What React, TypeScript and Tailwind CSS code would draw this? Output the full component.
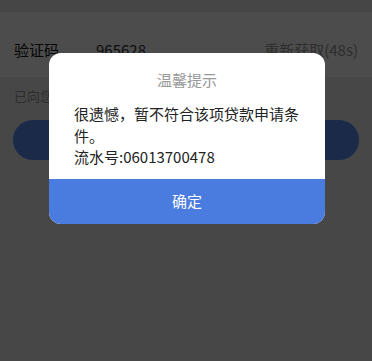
import React from 'react';

const font = { fontFamily: '"Noto Sans CJK SC", "Noto Sans", sans-serif' };

export default function App() {
    return (
        <div className="relative w-[372px] h-[361px] overflow-hidden bg-[#eeeeee]" style={font}>
            {/* page underneath */}
            <div className="h-[12px] bg-[#eaeaea] border-b border-[#e0e0e0]" />
            <div className="h-[65px] bg-white flex items-start pt-[26px] px-[14px] text-[15px] leading-[24px]">
                <span className="text-[#111111] w-[82px]">验证码</span>
                <span className="text-[#333333] flex-1">965628</span>
                <span className="text-[#999999]">重新获取(48s)</span>
            </div>
            <div className="px-[14px] pt-[9px] text-[13px] text-[#999999]">已向您的手机发送验证码</div>
            <div className="mx-[13px] mt-[14px] h-[40px] rounded-full bg-[#5b8cf0] flex items-center justify-center text-white text-[16px]">
                下一步
            </div>

            {/* overlay */}
            <div className="absolute inset-0 bg-black/70" />

            {/* dialog */}
            <div className="absolute left-[49px] top-[53px] w-[276px] bg-white rounded-[12px] overflow-hidden">
                <div className="pt-[16px] text-center text-[15px] leading-[21px] text-[#999999]">温馨提示</div>
                <div className="px-[25px] pt-[13px] pb-[11px] text-[15px] leading-[21.5px] text-[#222222]">
                    <p>很遗憾，暂不符合该项贷款申请条件。</p>
                    <p>流水号:06013700478</p>
                </div>
                <button className="w-full h-[45px] bg-[#4a7bdf] text-white text-[15px]">确定</button>
            </div>
        </div>
    );
}
